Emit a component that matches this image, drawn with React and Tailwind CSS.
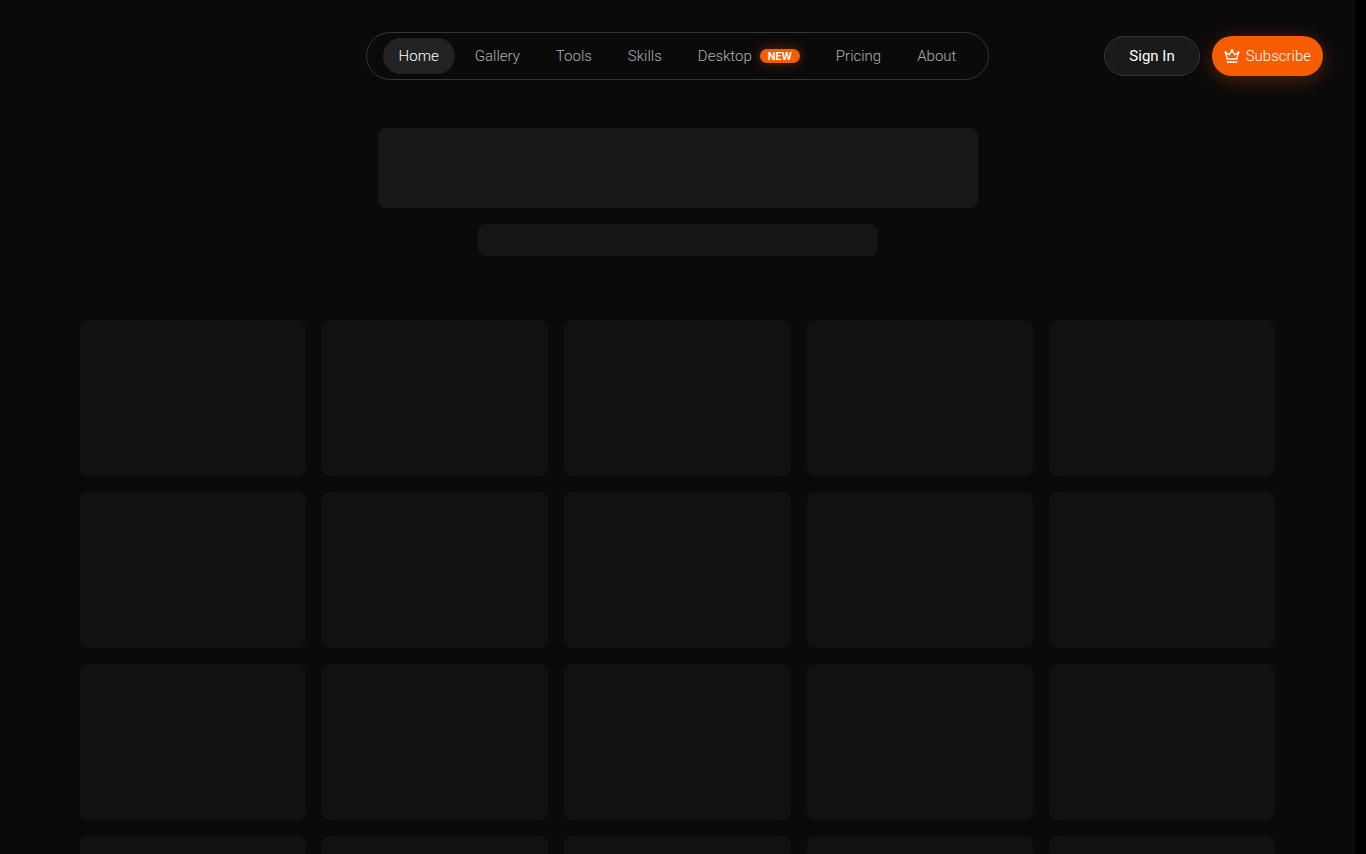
import React from 'react';
import clsx from 'clsx';

const navItems = [
  { label: 'Home', active: true },
  { label: 'Gallery' },
  { label: 'Tools' },
  { label: 'Skills' },
  { label: 'Desktop', badge: 'NEW' },
  { label: 'Pricing' },
  { label: 'About' },
];

const CrownIcon = () => (
  <svg
    className="size-4"
    viewBox="0 0 16 16"
    fill="none"
    stroke="currentColor"
    strokeWidth="1.3"
    strokeLinecap="round"
    strokeLinejoin="round"
    aria-hidden="true"
  >
    <path d="M3.2 11 1.8 4.6 5.2 6.8 8 2.4l2.8 4.4 3.4-2.2L12.8 11z" />
    <path d="M3.2 14h9.6" />
    <circle cx="1.6" cy="4.4" r="0.6" fill="currentColor" />
    <circle cx="8" cy="2.2" r="0.6" fill="currentColor" />
    <circle cx="14.4" cy="4.4" r="0.6" fill="currentColor" />
  </svg>
);

const Header = () => (
  <header className="grid grid-cols-[1fr_auto_1fr] items-center px-8 pt-8">
    <nav className="col-start-2 flex h-12 items-center gap-1 rounded-full border border-[#333333] px-4">
      {navItems.map((item) => (
        <a
          key={item.label}
          href="#"
          className={clsx(
            'flex h-9 items-center gap-2 rounded-full px-4 text-[15px] font-light',
            item.active ? 'bg-[#222222] text-white' : 'text-[#b0b0b0]'
          )}
        >
          {item.label}
          {item.badge && (
            <span className="rounded-full bg-[#f55d00] px-2 font-['Inter',sans-serif] text-[10px] leading-[14px] font-bold text-white shadow-[0_0_12px_rgba(249,93,0,0.4)]">
              {item.badge}
            </span>
          )}
        </a>
      ))}
    </nav>

    <div className="flex items-center gap-3 justify-self-end">
      <button className="h-10 rounded-full border border-[#333333] bg-[#1a1a1a] px-6 text-[15px] text-white">
        Sign In
      </button>
      <button className="flex h-10 items-center gap-[6px] rounded-full bg-[#f55d00] px-3 text-[15px] font-light text-white shadow-[0_4px_20px_rgba(249,93,0,0.3)]">
        <CrownIcon />
        Subscribe
      </button>
    </div>
  </header>
);

const App = () => {
  return (
    <div className="h-screen overflow-hidden bg-black pr-[11px] font-[Roboto,sans-serif]">
      <div className="min-h-full bg-[#0a0a0a]">
        <Header />

        <main className="px-20 pt-12">
          {/* Title placeholders */}
          <div className="flex flex-col items-center gap-4">
            <div className="h-20 w-full max-w-[600px] rounded-lg bg-[#171717]" />
            <div className="h-8 w-full max-w-[400px] rounded-lg bg-[#151515]" />
          </div>

          {/* Gallery placeholders */}
          <div className="mt-16 grid grid-cols-5 gap-4">
            {Array.from({ length: 20 }, (_, i) => (
              <div key={i} className="h-[156px] rounded-lg bg-[#111111]" />
            ))}
          </div>
        </main>
      </div>
    </div>
  );
};

export default App;
